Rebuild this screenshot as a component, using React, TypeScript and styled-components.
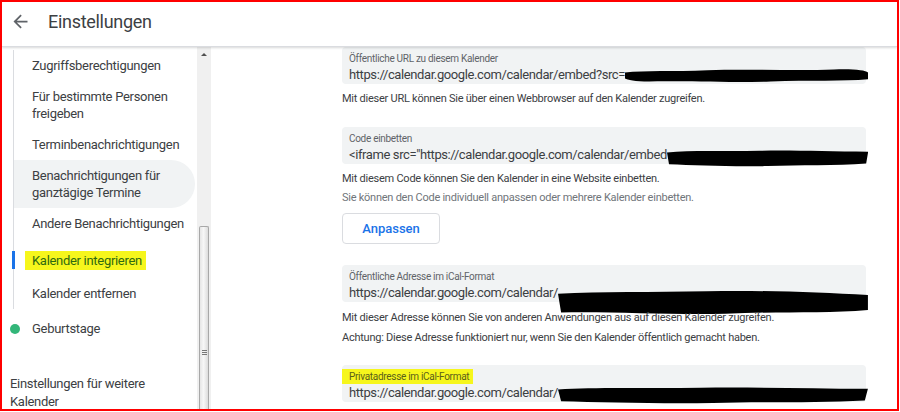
import styled, { createGlobalStyle } from 'styled-components';

const GlobalStyle = createGlobalStyle`
  body {
    margin: 0;
    background: #fff;
    font-family: Roboto, "Liberation Sans", Arial, sans-serif;
  }
`;

const navItems = [
  { label: 'Zugriffsberechtigungen' },
  { label: 'Für bestimmte Personen freigeben' },
  { label: 'Terminbenachrichtigungen' },
  { label: 'Benachrichtigungen für ganztägige Termine', hover: true },
  { label: 'Andere Benachrichtigungen' },
  { label: 'Kalender integrieren', active: true },
  { label: 'Kalender entfernen' },
];

const blobs = [
  'M0 6 C8 3 20 5 34 3 C50 1 70 4 86 2 C94 1 99 3 100 6 L100 15 C90 18 76 16 60 18 C44 20 24 17 10 18 C4 18 1 16 0 14 Z',
  'M0 4 C12 1 28 3 46 2 C62 1 80 3 100 3 L99 16 C84 19 66 17 50 19 C32 20 14 18 1 17 Z',
  'M0 3 C14 1 30 2 48 1 C66 0 84 2 100 4 L100 16 C86 19 70 17 54 19 C36 20 16 17 1 18 Z',
];

const Redaction = ({ height, shape = 0, shift = 0 }: { height: number; shape?: number; shift?: number }) => (
  <RedactionSvg
    height={height}
    viewBox="0 0 100 20"
    preserveAspectRatio="none"
    style={{ marginTop: shift }}
  >
    <path d={blobs[shape]} fill="#000" />
  </RedactionSvg>
);

const App = () => {
  return (
    <>
      <GlobalStyle />
      <Frame>
        <Header>
          <BackButton>
            <svg width="21" height="21" viewBox="0 0 24 24">
              <path d="M20 11H7.83l5.59-5.59L12 4l-8 8 8 8 1.41-1.41L7.83 13H20v-2z" fill="#5f6368" />
            </svg>
          </BackButton>
          <Title>Einstellungen</Title>
        </Header>
        <Body>
          <Sidebar>
            <SubList>
              {navItems.map((item) => (
                <NavItem key={item.label} $hover={item.hover} $active={item.active}>
                  {item.active ? <Highlight $green>{item.label}</Highlight> : item.label}
                </NavItem>
              ))}
            </SubList>
            <CalendarRow>
              <Dot />
              Geburtstage
            </CalendarRow>
            <SectionTitle>Einstellungen für weitere Kalender</SectionTitle>
          </Sidebar>
          <Scrollbar>
            <ScrollArrow />
            <Thumb>
              <Grip />
            </Thumb>
          </Scrollbar>
          <Main>
            <Field>
              <FieldLabel>Öffentliche URL zu diesem Kalender</FieldLabel>
              <FieldValue>
                <span>https://calendar.google.com/calendar/embed?src=</span>
                <Redaction height={15} shape={0} shift={2} />
              </FieldValue>
            </Field>
            <Hint>Mit dieser URL können Sie über einen Webbrowser auf den Kalender zugreifen.</Hint>

            <Field $gap={19}>
              <FieldLabel>Code einbetten</FieldLabel>
              <FieldValue>
                <span>&lt;iframe src="https://calendar.google.com/calendar/embed</span>
                <Redaction height={18} shape={1} shift={3} />
              </FieldValue>
            </Field>
            <Hint>Mit diesem Code können Sie den Kalender in eine Website einbetten.</Hint>
            <Hint $muted $flush>Sie können den Code individuell anpassen oder mehrere Kalender einbetten.</Hint>
            <OutlineButton>Anpassen</OutlineButton>

            <Field $gap={21}>
              <FieldLabel>Öffentliche Adresse im iCal-Format</FieldLabel>
              <FieldValue>
                <span>https://calendar.google.com/calendar/</span>
                <Redaction height={25} shape={2} shift={6} />
              </FieldValue>
            </Field>
            <Hint $tall>Mit dieser Adresse können Sie von anderen Anwendungen aus auf diesen Kalender zugreifen.</Hint>
            <Hint $tall $flush>Achtung: Diese Adresse funktioniert nur, wenn Sie den Kalender öffentlich gemacht haben.</Hint>

            <Field $gap={17}>
              <FieldLabel>
                <Highlight>Privatadresse im iCal-Format</Highlight>
              </FieldLabel>
              <FieldValue>
                <span>https://calendar.google.com/calendar/</span>
                <Redaction height={18} shape={1} shift={2} />
              </FieldValue>
            </Field>
          </Main>
        </Body>
      </Frame>
    </>
  );
};

const Frame = styled.div`
  width: 899px;
  height: 411px;
  box-sizing: border-box;
  border: 2px solid #ff0000;
  display: flex;
  flex-direction: column;
  overflow: hidden;
  background: #fff;
`;

const Header = styled.header`
  height: 44px;
  flex-shrink: 0;
  display: flex;
  align-items: center;
  border-bottom: 1px solid #dadce0;
  box-shadow: 0 1px 2px rgba(60, 64, 67, 0.2);
  position: relative;
  z-index: 1;
`;

const BackButton = styled.div`
  width: 21px;
  height: 21px;
  margin-left: 8px;
  margin-top: -6px;
  display: flex;
`;

const Title = styled.h1`
  margin: -6px 0 0 17px;
  font-size: 18px;
  font-weight: 400;
  color: #3c4043;
  letter-spacing: -0.3px;
`;

const Body = styled.div`
  flex: 1;
  display: flex;
  overflow: hidden;
`;

const Sidebar = styled.nav`
  width: 195px;
  flex-shrink: 0;
  padding-top: 3px;
  font-size: 13px;
  letter-spacing: -0.3px;
  color: #3c4043;
`;

const SubList = styled.div`
  margin-left: 11px;
  border-left: 1px solid #dadce0;
`;

const NavItem = styled.div<{ $hover?: boolean; $active?: boolean }>`
  position: relative;
  padding: ${(p) => (p.$active ? '9.5px' : '7px')} 8px ${(p) => (p.$active ? '9.5px' : '7px')} 18px;
  margin-top: ${(p) => (p.$active ? '3px' : '0')};
  margin-right: 2px;
  line-height: 17px;
  border-radius: 0 24px 24px 0;
  background: ${(p) => (p.$hover ? '#f1f3f4' : 'transparent')};

  &::before {
    content: '';
    display: ${(p) => (p.$active ? 'block' : 'none')};
    position: absolute;
    left: -2px;
    top: 9px;
    bottom: 9px;
    width: 3px;
    background: #1a73e8;
  }
`;

const Highlight = styled.span<{ $green?: boolean }>`
  background: #f6f61c;
  padding: 2px 4px 2px 7px;
  margin-left: -7px;
  color: ${(p) => (p.$green ? '#2f6a10' : '#5b5f1a')};
`;

const CalendarRow = styled.div`
  display: flex;
  align-items: center;
  gap: 12px;
  margin-top: 4px;
  padding: 7px 0 7px 8px;
  line-height: 17px;
`;

const Dot = styled.span`
  width: 10px;
  height: 10px;
  border-radius: 50%;
  background: #33b679;
`;

const SectionTitle = styled.div`
  margin-top: 31px;
  padding: 0 30px 0 8px;
  line-height: 18px;
`;

const Scrollbar = styled.div`
  width: 14px;
  flex-shrink: 0;
  background: #f0f0f0;
  display: flex;
  flex-direction: column;
  align-items: center;
`;

const ScrollArrow = styled.div`
  margin-top: 6px;
  width: 0;
  height: 0;
  border-left: 3px solid transparent;
  border-right: 3px solid transparent;
  border-bottom: 3px solid #505050;
`;

const Thumb = styled.div`
  margin-top: auto;
  width: 10px;
  height: 183px;
  box-sizing: border-box;
  border: 1px solid #a8a8a8;
  border-bottom: none;
  border-radius: 2px 2px 0 0;
  background: linear-gradient(to right, #e6e6e6, #f7f7f7 45%, #dcdcdc);
  display: flex;
  justify-content: center;
`;

const Grip = styled.div`
  margin-top: 123px;
  width: 5px;
  height: 5px;
  background: repeating-linear-gradient(to bottom, #777 0 1px, transparent 1px 2px);
`;

const Main = styled.main`
  flex: 1;
  padding: 0 32px 0 131px;
`;

const Field = styled.div<{ $gap?: number }>`
  width: 524px;
  box-sizing: border-box;
  margin-top: ${(p) => p.$gap ?? 0}px;
  padding: 4px 0 0 7px;
  height: 37px;
  background: #f1f3f4;
  border-radius: 4px;
`;

const FieldLabel = styled.div`
  font-size: 10px;
  letter-spacing: -0.3px;
  line-height: 15px;
  color: #5f6368;
`;

const FieldValue = styled.div`
  display: flex;
  align-items: flex-start;
  height: 18px;
  line-height: 18px;
  font-size: 13px;
  letter-spacing: -0.4px;
  color: #3c4043;
  white-space: nowrap;
  margin-right: -2px;

  span {
    flex-shrink: 0;
  }
`;

const RedactionSvg = styled.svg`
  flex: 1;
  min-width: 0;
  display: block;
`;

const Hint = styled.p<{ $muted?: boolean; $tall?: boolean; $flush?: boolean }>`
  margin: ${(p) => (p.$flush ? '0' : p.$tall ? '6px' : '5px')} 0 0;
  font-size: 11px;
  letter-spacing: -0.25px;
  line-height: ${(p) => (p.$tall ? '20px' : '19px')};
  color: ${(p) => (p.$muted ? '#70757a' : '#3c4043')};
`;

const OutlineButton = styled.button`
  display: block;
  margin-top: 6px;
  width: 98px;
  height: 31px;
  background: #fff;
  border: 1px solid #dadce0;
  border-radius: 4px;
  font-family: Roboto, "Liberation Sans", Arial, sans-serif;
  font-size: 13px;
  font-weight: 500;
  color: #1a73e8;
  cursor: pointer;
`;

export default App;
